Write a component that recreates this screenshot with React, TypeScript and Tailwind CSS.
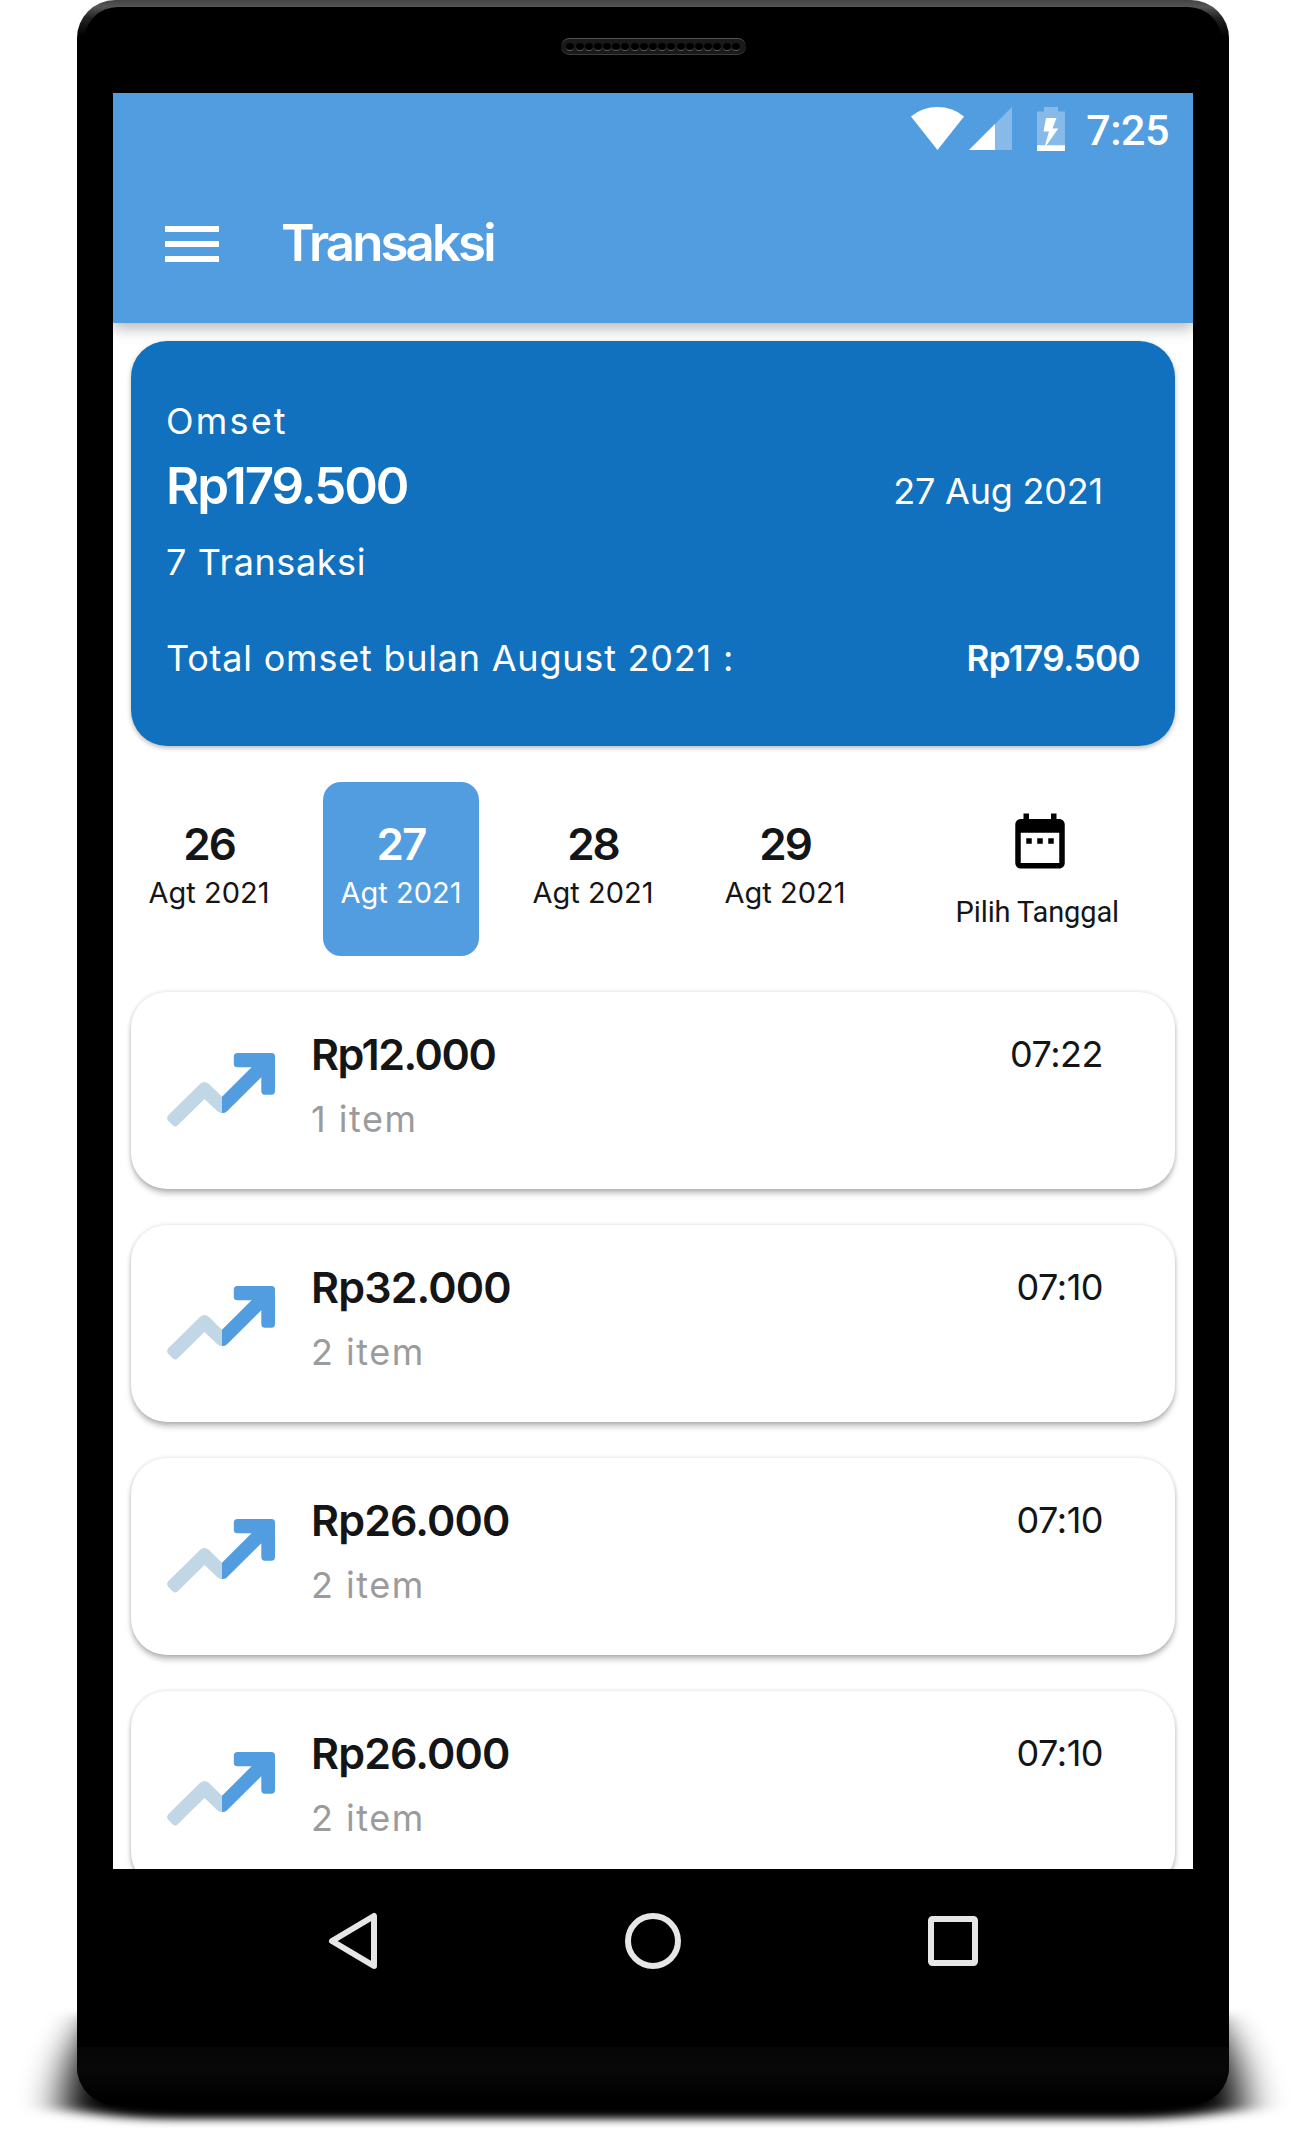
import React from "react";
import { MdDateRange } from "react-icons/md";

const dates = [
  { day: "26", active: false },
  { day: "27", active: true },
  { day: "28", active: false },
  { day: "29", active: false },
];

const transactions = [
  { amount: "Rp12.000", items: "1 item", time: "07:22", tracking: "tracking-[-1.46px]" },
  { amount: "Rp32.000", items: "2 item", time: "07:10", tracking: "tracking-[-0.87px]" },
  { amount: "Rp26.000", items: "2 item", time: "07:10", tracking: "tracking-[-0.87px]" },
  { amount: "Rp26.000", items: "2 item", time: "07:10", tracking: "tracking-[-0.87px]" },
];

function TrendIcon() {
  return (
    <svg className="mt-[61px] h-[74px] w-[108px] shrink-0" viewBox="0 0 108 74">
      <path
        fill="#c2d7e6"
        d="M55 43.7 41.8 30.8Q37.5 27.2 33.2 30.8L1.2 62.2Q-1 65 1.2 67.8L5.6 72.2Q8.2 74.6 10.8 72.2L37.5 46 50.6 58.6Q52.8 60.3 55 60Z"
      />
      <path
        fill="#529ce0"
        d="M70.5 0H104.5Q108 0 108 3.5V38Q108 41.7 104.5 41.7H98Q94.3 41.7 94.3 38V24.3L59.8 58.4Q57.8 60.3 55 60V43.7L84.6 14.3H70.5Q66.8 14.3 66.8 10.8V3.5Q66.8 0 70.5 0Z"
      />
    </svg>
  );
}

function Speaker() {
  return (
    <div className="flex h-[17px] w-[185px] items-center justify-center gap-[1.2px] rounded-full border-y border-t-[#505050] border-b-[#3c3c3c] bg-[#1a1a1a] pt-px">
      {Array.from({ length: 19 }, (_, i) => (
        <span key={i} className="h-[8px] w-[8px] rounded-full border-b border-[#606060] bg-black" />
      ))}
    </div>
  );
}

function StatusBar() {
  return (
    <div className="flex h-[72px] items-start justify-end pt-[14px] pr-[24px]">
      <svg className="h-[43px] w-[53px]" viewBox="0 0 53 43" fill="#fff">
        <path d="M0 9.5Q11 0 26.5 0T53 9.5L26.5 43Z" />
      </svg>
      <svg className="ml-[5px] h-[43px] w-[43px]" viewBox="0 0 43 43">
        <path fill="#87b9e9" d="M43 0V43H0Z" />
        <path fill="#fff" d="M26 17V43H0Z" />
      </svg>
      <svg className="ml-[25px] h-[44px] w-[28px]" viewBox="0 0 28 44">
        <path fill="#87b9e9" d="M7 0H21V4.5H28V44H0V4.5H7Z" />
        <path fill="#fff" d="M0 38.3H8L12 24.5H6.5L9 11H19.5L15.5 21.5H21.3L9.5 38.3H28V44H0Z" />
      </svg>
      <span className="ml-[21px] font-['Roboto',sans-serif] text-[43px] leading-[46px] font-medium tracking-[-0.5px] text-white">
        7:25
      </span>
    </div>
  );
}

function AppBar() {
  return (
    <header className="relative h-[230px] shrink-0 bg-[#529ce0] shadow-[0_5px_14px_rgba(0,0,0,0.3)]">
      <StatusBar />
      <div className="flex h-[158px] items-center pl-[52px]">
        <div className="flex w-[54px] flex-col gap-[9px]">
          <span className="h-[6px] bg-white" />
          <span className="h-[6px] bg-white" />
          <span className="h-[6px] bg-white" />
        </div>
        <h1 className="-mt-[3px] ml-[62px] text-[51px] leading-[64px] font-semibold tracking-[-2.9px] text-white">
          Transaksi
        </h1>
      </div>
    </header>
  );
}

function SummaryCard() {
  return (
    <section className="relative mt-[18px] h-[405px] rounded-[36px] bg-[#1271be] px-[35px] pt-[60px] text-[36px] leading-[40px] text-white shadow-[0_2px_5px_rgba(0,0,0,0.28)]">
      <p className="tracking-[2.2px]">Omset</p>
      <div className="mt-[13px] flex h-[64px] justify-between">
        <p className="text-[51px] leading-[64px] font-semibold tracking-[-2.1px]">Rp179.500</p>
        <p className="mt-[17px] mr-[37px] tracking-[-0.2px]">27 Aug 2021</p>
      </div>
      <p className="mt-[24px] tracking-[0.6px]">7 Transaksi</p>
      <div className="mt-[56px] flex justify-between">
        <p className="tracking-[0.78px]">Total omset bulan August 2021 :</p>
        <p className="text-[35px] font-semibold tracking-[-0.56px]">Rp179.500</p>
      </div>
    </section>
  );
}

function DatePicker() {
  return (
    <section className="mt-[36px] flex h-[174px] gap-[36px] text-[#141517]">
      {dates.map((d) => (
        <div
          key={d.day}
          className={`flex w-[156px] flex-col items-center rounded-[18px] pt-[37px] ${d.active ? "bg-[#529ce0] text-white" : ""}`}
        >
          <span className="text-[44px] leading-[50px] font-semibold tracking-[-2px]">{d.day}</span>
          <span className="mt-[6px] text-[29px] leading-[36px]">Agt 2021</span>
        </div>
      ))}
      <div className="mr-[56px] ml-auto flex flex-col items-center pt-[26px]">
        <MdDateRange className="ml-[5px] size-[66px] text-black" />
        <span className="mt-[20px] font-['Roboto',sans-serif] text-[29px] leading-[36px] tracking-[-0.12px] whitespace-nowrap">
          Pilih Tanggal
        </span>
      </div>
    </section>
  );
}

function TransactionCard({ amount, items, time, tracking }: (typeof transactions)[number]) {
  return (
    <li className="flex h-[197px] shrink-0 rounded-[36px] bg-white pr-[72px] pl-[36px] shadow-[0_5px_6px_-1px_rgba(0,0,0,0.28),0_0_4px_rgba(0,0,0,0.15)]">
      <TrendIcon />
      <div className="ml-[36px] flex-1 pt-[37px]">
        <p className={`text-[43px] leading-[50px] font-semibold text-[#141517] ${tracking}`}>{amount}</p>
        <p className="mt-[20px] text-[36px] leading-[40px] tracking-[1.5px] text-[#9b9b9b]">{items}</p>
      </div>
      <p className="pt-[37px] text-[36px] leading-[50px] tracking-[-0.5px] text-[#141517]">{time}</p>
    </li>
  );
}

function NavBar() {
  return (
    <nav className="flex h-[144px] items-center justify-center gap-[240px]">
      <svg className="size-[60px]" viewBox="0 0 60 60" fill="none" stroke="#e6e6e6" strokeWidth="6" strokeLinejoin="round">
        <path d="M51 5V55L9 30Z" />
      </svg>
      <svg className="size-[60px]" viewBox="0 0 60 60" fill="none" stroke="#e6e6e6" strokeWidth="6">
        <circle cx="30" cy="30" r="25" />
      </svg>
      <svg className="size-[60px]" viewBox="0 0 60 60" fill="none" stroke="#e6e6e6" strokeWidth="6">
        <rect x="8" y="8" width="44" height="44" rx="1.5" />
      </svg>
    </nav>
  );
}

export default function App() {
  return (
    <div className="relative h-[2130px] w-[1305px] overflow-hidden bg-white pl-[77px] font-['Inter',sans-serif]">
      {/* Ground shadow under the handset */}
      <svg className="absolute bottom-0 left-0 h-[160px] w-[1305px]" viewBox="0 1970 1305 160">
        <defs>
          <filter id="ground" x="-10%" y="-50%" width="120%" height="200%">
            <feGaussianBlur stdDeviation="21 4" />
          </filter>
        </defs>
        <path
          filter="url(#ground)"
          d="M160 2119Q110 2118 64 2108Q66 2060 98 2015H1208Q1240 2060 1242 2108Q1196 2118 1146 2119Z"
        />
      </svg>
      <div className="relative h-[2105px] w-[1152px] overflow-hidden rounded-[38px] bg-[linear-gradient(to_bottom,#444_0,#555_7px,#222_18px,#000_36px)]">
        <div className="absolute inset-x-[7px] top-[7px] bottom-0 rounded-t-[34px] bg-black" />
        <div className="absolute inset-x-0 bottom-0 h-[58px] bg-[linear-gradient(to_bottom,#060606,#080808_40%,#000_90%)]" />
        <div className="relative flex h-[93px] justify-center pt-[38px]">
          <Speaker />
        </div>
        <main className="relative mx-[36px] flex h-[1776px] flex-col overflow-hidden bg-white">
          <AppBar />
          <div className="px-[18px]">
            <SummaryCard />
            <DatePicker />
            <ul className="mt-[36px] flex flex-col gap-[36px]">
              {transactions.map((t, i) => (
                <TransactionCard key={i} {...t} />
              ))}
            </ul>
          </div>
        </main>
        <div className="relative">
          <NavBar />
        </div>
      </div>
    </div>
  );
}
